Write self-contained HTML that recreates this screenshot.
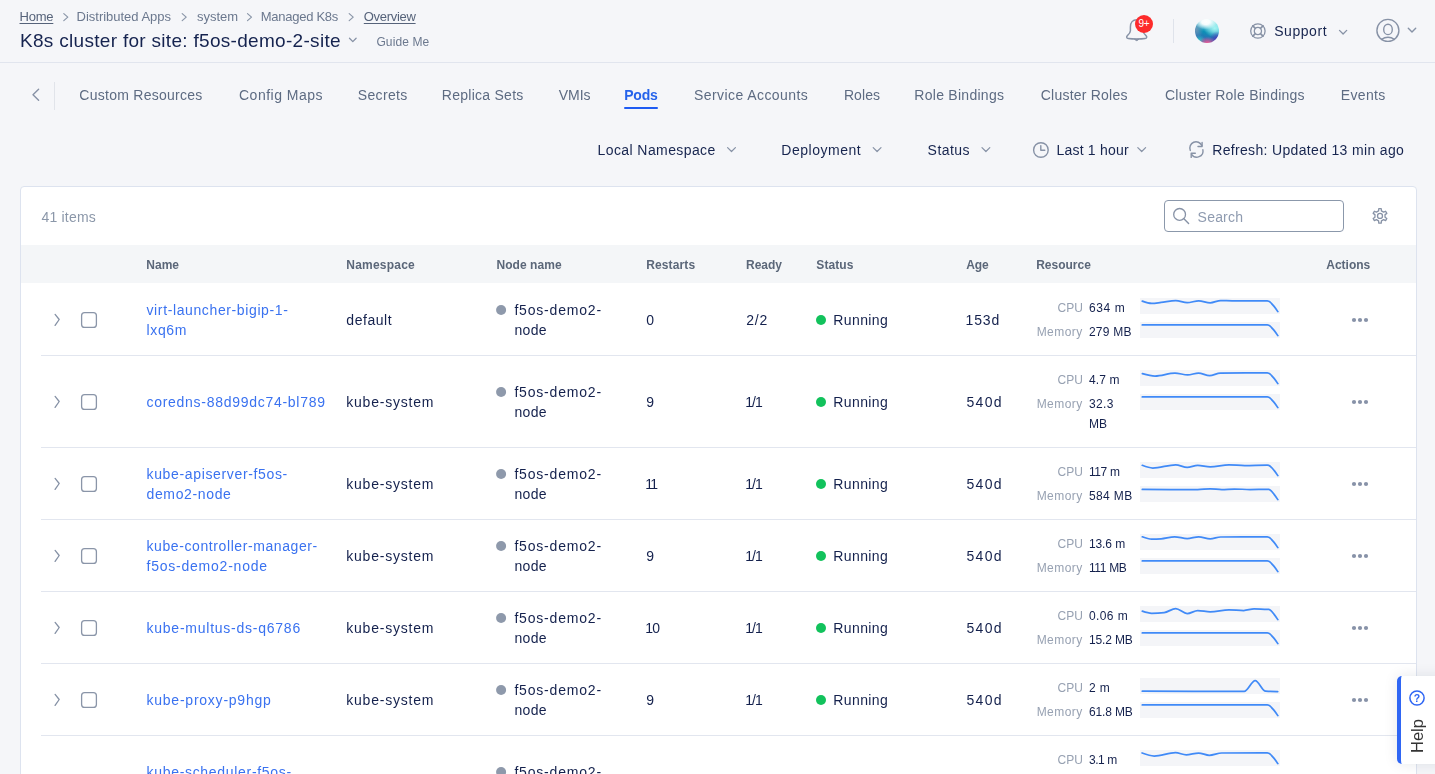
<!DOCTYPE html>
<html><head><meta charset="utf-8"><style>
html,body{margin:0;padding:0;}
body{width:1435px;height:774px;overflow:hidden;background:#f5f6f9;position:relative;font-family:"Liberation Sans", sans-serif;}
.t{position:absolute;white-space:pre;line-height:20px;}
svg.ov{position:absolute;left:0;top:0;width:1435px;height:774px;overflow:visible;}
</style></head><body>
<div style="position:absolute;left:0;top:62px;width:1435px;height:1px;background:#e1e5ee"></div>
<div style="position:absolute;left:1173px;top:19px;width:1px;height:24px;background:#dfe3eb"></div>
<div style="position:absolute;left:54px;top:82px;width:1px;height:28px;background:#e1e4ea"></div>
<div style="position:absolute;left:624px;top:107px;width:34px;height:2px;background:#1f5cf3;border-radius:1px"></div>
<div style="position:absolute;left:1195px;top:19px;width:24px;height:24px;border-radius:50%;background:
radial-gradient(ellipse 48% 32% at 45% 12%, #fff 0%, rgba(255,255,255,0.95) 35%, rgba(255,255,255,0) 100%),
radial-gradient(ellipse 38% 26% at 52% 100%, rgba(238,90,150,1) 0%, rgba(238,90,150,0) 100%),
radial-gradient(ellipse 32% 34% at 92% 85%, rgba(85,55,185,1) 0%, rgba(85,55,185,0) 100%),
radial-gradient(ellipse 26% 22% at 18% 88%, rgba(40,200,200,0.95) 0, rgba(40,200,200,0) 100%),
radial-gradient(ellipse 45% 38% at 82% 38%, rgba(165,245,242,1) 0%, rgba(165,245,242,0) 100%),
radial-gradient(ellipse 30% 35% at 5% 45%, rgba(130,150,185,0.8) 0%, rgba(130,150,185,0) 100%),
linear-gradient(195deg, #b5f3f3 5%, #5cc9dc 32%, #0b8fb6 55%, #2a72b4 75%, #6a4fa8 100%);"></div>
<div style="position:absolute;left:20px;top:186px;width:1395px;height:700px;background:#fff;border:1px solid #dde3ef;border-radius:4px"></div>
<div style="position:absolute;left:21px;top:245px;width:1395px;height:38px;background:#f4f6f8"></div>
<div style="position:absolute;left:1164px;top:200px;width:178px;height:30px;border:1px solid #8b98ab;border-radius:4px;background:#fff"></div>
<svg class="ov">
<polyline points="63.80,13.60 67.80,17.10 63.80,20.60" fill="none" stroke="#8a96a8" stroke-width="1.2" stroke-linecap="round" stroke-linejoin="round"/>
<polyline points="182.20,13.60 186.20,17.10 182.20,20.60" fill="none" stroke="#8a96a8" stroke-width="1.2" stroke-linecap="round" stroke-linejoin="round"/>
<polyline points="247.50,13.60 251.50,17.10 247.50,20.60" fill="none" stroke="#8a96a8" stroke-width="1.2" stroke-linecap="round" stroke-linejoin="round"/>
<polyline points="349.20,13.60 353.20,17.10 349.20,20.60" fill="none" stroke="#8a96a8" stroke-width="1.2" stroke-linecap="round" stroke-linejoin="round"/>
<polyline points="349.50,38.30 352.80,41.60 356.10,38.30" fill="none" stroke="#8792a6" stroke-width="1.3" stroke-linecap="round" stroke-linejoin="round"/>
<polyline points="1339.50,30.40 1343.10,34.00 1346.70,30.40" fill="none" stroke="#8792a6" stroke-width="1.3" stroke-linecap="round" stroke-linejoin="round"/>
<polyline points="1408.30,28.30 1412.00,32.00 1415.70,28.30" fill="none" stroke="#8792a6" stroke-width="1.4" stroke-linecap="round" stroke-linejoin="round"/>
<polyline points="38.60,89.30 33.00,94.80 38.60,100.30" fill="none" stroke="#8792a6" stroke-width="1.4" stroke-linecap="round" stroke-linejoin="round"/>
<polyline points="727.60,147.60 731.50,151.50 735.40,147.60" fill="none" stroke="#8792a6" stroke-width="1.2" stroke-linecap="round" stroke-linejoin="round"/>
<polyline points="873.20,147.60 877.10,151.50 881.00,147.60" fill="none" stroke="#8792a6" stroke-width="1.2" stroke-linecap="round" stroke-linejoin="round"/>
<polyline points="982.00,147.60 985.90,151.50 989.80,147.60" fill="none" stroke="#8792a6" stroke-width="1.2" stroke-linecap="round" stroke-linejoin="round"/>
<polyline points="1137.80,147.60 1141.70,151.50 1145.60,147.60" fill="none" stroke="#8792a6" stroke-width="1.2" stroke-linecap="round" stroke-linejoin="round"/>
<circle cx="1040.9" cy="150" r="7.3" fill="none" stroke="#8792a6" stroke-width="1.4"/>
<polyline points="1040.80,145.60 1040.80,150.20 1044.80,150.20" fill="none" stroke="#8792a6" stroke-width="1.4" stroke-linecap="round" stroke-linejoin="round"/>
<path d="M1190.3,150.4 A6.2,6.2 0 0 1 1201.8,145.6" fill="none" stroke="#8792a6" stroke-width="1.4" stroke-linecap="round"/>
<polyline points="1202.10,142.40 1202.10,146.50 1198.00,146.50" fill="none" stroke="#8792a6" stroke-width="1.4" stroke-linecap="round" stroke-linejoin="round"/>
<path d="M1202.9,149.8 A6.2,6.2 0 0 1 1191.6,154.3" fill="none" stroke="#8792a6" stroke-width="1.4" stroke-linecap="round"/>
<polyline points="1191.20,157.40 1191.20,153.30 1195.30,153.30" fill="none" stroke="#8792a6" stroke-width="1.4" stroke-linecap="round" stroke-linejoin="round"/>
<circle cx="1179.6" cy="214.4" r="5.9" fill="none" stroke="#8792a6" stroke-width="1.3"/>
<polyline points="1183.90,218.80 1188.60,223.50" fill="none" stroke="#8792a6" stroke-width="1.4" stroke-linecap="round" stroke-linejoin="round"/>
<path d="M1378.58,210.90 L1378.77,208.70 L1381.23,208.70 L1381.42,210.90 L1383.62,212.17 L1385.62,211.24 L1386.85,213.37 L1385.04,214.63 L1385.04,217.17 L1386.85,218.43 L1385.62,220.56 L1383.62,219.63 L1381.42,220.90 L1381.23,223.10 L1378.77,223.10 L1378.58,220.90 L1376.38,219.63 L1374.38,220.56 L1373.15,218.43 L1374.96,217.17 L1374.96,214.63 L1373.15,213.37 L1374.38,211.24 L1376.38,212.17Z" fill="none" stroke="#8792a6" stroke-width="1.3" stroke-linejoin="round"/>
<circle cx="1380" cy="215.9" r="2.5" fill="none" stroke="#8792a6" stroke-width="1.3"/>
<circle cx="1257.9" cy="31" r="7.2" fill="none" stroke="#8792a6" stroke-width="1.3"/>
<circle cx="1257.9" cy="31" r="3.6" fill="none" stroke="#8792a6" stroke-width="1.3"/>
<polyline points="1260.45,33.55 1262.99,36.09" fill="none" stroke="#8792a6" stroke-width="1.7" stroke-linecap="round" stroke-linejoin="round"/>
<polyline points="1255.35,33.55 1252.81,36.09" fill="none" stroke="#8792a6" stroke-width="1.7" stroke-linecap="round" stroke-linejoin="round"/>
<polyline points="1255.35,28.45 1252.81,25.91" fill="none" stroke="#8792a6" stroke-width="1.7" stroke-linecap="round" stroke-linejoin="round"/>
<polyline points="1260.45,28.45 1262.99,25.91" fill="none" stroke="#8792a6" stroke-width="1.7" stroke-linecap="round" stroke-linejoin="round"/>
<circle cx="1387.9" cy="30.4" r="11.0" fill="none" stroke="#8792a6" stroke-width="1.4"/>
<ellipse cx="1388" cy="29.4" rx="4.3" ry="5.2" fill="none" stroke="#8792a6" stroke-width="1.4"/>
<path d="M1381.3,39.6 Q1388,35.0 1394.7,39.6" fill="none" stroke="#8792a6" stroke-width="1.4"/>
<path d="M1136.7,19.8 C1132.8,19.8 1130.4,22.9 1130.4,26.9 L1130.4,30.8 C1130.4,33.0 1129.0,34.3 1127.4,35.6 C1126.2,36.6 1126.5,38.4 1128.3,38.6 C1131.0,39.0 1133.8,39.1 1136.7,39.1 C1139.6,39.1 1142.4,39.0 1145.1,38.6 C1146.9,38.4 1147.2,36.6 1146.0,35.6 C1144.4,34.3 1143.0,33.0 1143.0,30.8 L1143.0,26.9 C1143.0,22.9 1140.6,19.8 1136.7,19.8 Z" fill="none" stroke="#8792a6" stroke-width="1.5"/>
<path d="M1134.5,39.3 Q1136.7,42.0 1138.9,39.3 Z" fill="#8792a6" stroke="#8792a6" stroke-width="1"/>
<polyline points="55.10,314.40 59.20,319.50 55.10,325.40" fill="none" stroke="#8591a5" stroke-width="1.3" stroke-linecap="round" stroke-linejoin="round"/>
<rect x="81.6" y="312.6" width="14.8" height="14.8" rx="3" fill="#fff" stroke="#8a95a8" stroke-width="1.3"/>
<circle cx="501.1" cy="310.0" r="5" fill="#8e99ab"/>
<circle cx="821" cy="320.0" r="5" fill="#12c25c"/>
<rect x="1140" y="298" width="140" height="16" fill="#f4f5f8"/>
<path d="M1142.30,301.10 C1145.43,302.25 1148.57,303.40 1151.70,303.40 C1154.83,303.40 1157.97,302.76 1161.10,302.40 C1166.00,301.84 1170.90,300.50 1175.80,300.50 C1179.60,300.50 1183.40,302.70 1187.20,302.70 C1191.03,302.70 1194.87,300.80 1198.70,300.80 C1202.53,300.80 1206.37,302.90 1210.20,302.90 C1213.70,302.90 1217.20,300.50 1220.70,300.50 C1224.53,300.50 1228.37,300.80 1232.20,300.80 C1243.90,300.80 1255.60,300.80 1267.30,300.80 C1267.80,300.80 1268.30,301.07 1268.80,301.30 C1270.63,302.16 1272.47,304.31 1274.30,306.60 C1275.47,308.06 1276.63,309.83 1277.80,311.60" fill="none" stroke="#408af7" stroke-width="1.75" stroke-linecap="round" stroke-linejoin="round"/>
<rect x="1140" y="322" width="140" height="16" fill="#f4f5f8"/>
<path d="M1142.30,324.90 C1161.53,324.90 1180.77,324.90 1200.00,324.90 C1222.43,324.90 1244.87,324.90 1267.30,324.90 C1267.80,324.90 1268.30,325.09 1268.80,325.30 C1270.63,326.06 1272.47,328.31 1274.30,330.60 C1275.47,332.06 1276.63,333.83 1277.80,335.60" fill="none" stroke="#408af7" stroke-width="1.75" stroke-linecap="round" stroke-linejoin="round"/>
<circle cx="1354" cy="320" r="2.1" fill="#8792a8"/>
<circle cx="1360" cy="320" r="2.1" fill="#8792a8"/>
<circle cx="1366" cy="320" r="2.1" fill="#8792a8"/>
<polyline points="55.10,396.40 59.20,401.50 55.10,407.40" fill="none" stroke="#8591a5" stroke-width="1.3" stroke-linecap="round" stroke-linejoin="round"/>
<rect x="81.6" y="394.6" width="14.8" height="14.8" rx="3" fill="#fff" stroke="#8a95a8" stroke-width="1.3"/>
<circle cx="501.1" cy="392.0" r="5" fill="#8e99ab"/>
<circle cx="821" cy="402.0" r="5" fill="#12c25c"/>
<rect x="1140" y="370" width="140" height="16" fill="#f4f5f8"/>
<path d="M1142.40,373.60 C1146.60,374.80 1150.80,376.00 1155.00,376.00 C1161.67,376.00 1168.33,373.10 1175.00,373.10 C1179.23,373.10 1183.47,374.90 1187.70,374.90 C1191.30,374.90 1194.90,373.10 1198.50,373.10 C1202.20,373.10 1205.90,375.60 1209.60,375.60 C1213.17,375.60 1216.73,373.15 1220.30,373.10 C1235.97,372.90 1251.63,372.80 1267.30,372.80 C1267.80,372.80 1268.30,373.07 1268.80,373.30 C1270.63,374.16 1272.47,376.31 1274.30,378.60 C1275.47,380.06 1276.63,381.83 1277.80,383.60" fill="none" stroke="#408af7" stroke-width="1.75" stroke-linecap="round" stroke-linejoin="round"/>
<rect x="1140" y="394" width="140" height="16" fill="#f4f5f8"/>
<path d="M1142.30,396.90 C1161.53,396.90 1180.77,396.90 1200.00,396.90 C1222.43,396.90 1244.87,396.90 1267.30,396.90 C1267.80,396.90 1268.30,397.09 1268.80,397.30 C1270.63,398.06 1272.47,400.31 1274.30,402.60 C1275.47,404.06 1276.63,405.83 1277.80,407.60" fill="none" stroke="#408af7" stroke-width="1.75" stroke-linecap="round" stroke-linejoin="round"/>
<circle cx="1354" cy="402" r="2.1" fill="#8792a8"/>
<circle cx="1360" cy="402" r="2.1" fill="#8792a8"/>
<circle cx="1366" cy="402" r="2.1" fill="#8792a8"/>
<polyline points="55.10,478.40 59.20,483.50 55.10,489.40" fill="none" stroke="#8591a5" stroke-width="1.3" stroke-linecap="round" stroke-linejoin="round"/>
<rect x="81.6" y="476.6" width="14.8" height="14.8" rx="3" fill="#fff" stroke="#8a95a8" stroke-width="1.3"/>
<circle cx="501.1" cy="474.0" r="5" fill="#8e99ab"/>
<circle cx="821" cy="484.0" r="5" fill="#12c25c"/>
<rect x="1140" y="462" width="140" height="16" fill="#f4f5f8"/>
<path d="M1142.30,465.30 C1145.80,466.65 1149.30,468.00 1152.80,468.00 C1160.43,468.00 1168.07,464.80 1175.70,464.80 C1179.53,464.80 1183.37,467.40 1187.20,467.40 C1190.70,467.40 1194.20,465.30 1197.70,465.30 C1201.87,465.30 1206.03,466.90 1210.20,466.90 C1216.47,466.90 1222.73,464.80 1229.00,464.80 C1234.23,464.80 1239.47,465.50 1244.70,465.50 C1252.23,465.50 1259.77,465.10 1267.30,465.10 C1267.80,465.10 1268.30,465.17 1268.80,465.30 C1270.63,465.79 1272.47,468.31 1274.30,470.60 C1275.47,472.06 1276.63,473.83 1277.80,475.60" fill="none" stroke="#408af7" stroke-width="1.75" stroke-linecap="round" stroke-linejoin="round"/>
<rect x="1140" y="486" width="140" height="16" fill="#f4f5f8"/>
<path d="M1142.30,489.40 C1160.77,489.50 1179.23,489.60 1197.70,489.60 C1201.87,489.60 1206.03,488.80 1210.20,488.80 C1214.07,488.80 1217.93,489.60 1221.80,489.60 C1225.97,489.60 1230.13,489.00 1234.30,489.00 C1239.53,489.00 1244.77,489.50 1250.00,489.50 C1255.77,489.50 1261.53,489.30 1267.30,489.30 C1267.80,489.30 1268.30,489.30 1268.80,489.30 C1270.63,489.30 1272.47,492.31 1274.30,494.60 C1275.47,496.06 1276.63,497.83 1277.80,499.60" fill="none" stroke="#408af7" stroke-width="1.75" stroke-linecap="round" stroke-linejoin="round"/>
<circle cx="1354" cy="484" r="2.1" fill="#8792a8"/>
<circle cx="1360" cy="484" r="2.1" fill="#8792a8"/>
<circle cx="1366" cy="484" r="2.1" fill="#8792a8"/>
<polyline points="55.10,550.40 59.20,555.50 55.10,561.40" fill="none" stroke="#8591a5" stroke-width="1.3" stroke-linecap="round" stroke-linejoin="round"/>
<rect x="81.6" y="548.6" width="14.8" height="14.8" rx="3" fill="#fff" stroke="#8a95a8" stroke-width="1.3"/>
<circle cx="501.1" cy="546.0" r="5" fill="#8e99ab"/>
<circle cx="821" cy="556.0" r="5" fill="#12c25c"/>
<rect x="1140" y="534" width="140" height="16" fill="#f4f5f8"/>
<path d="M1142.30,536.80 C1145.43,538.00 1148.57,539.20 1151.70,539.20 C1154.83,539.20 1157.97,539.07 1161.10,538.80 C1165.63,538.41 1170.17,536.80 1174.70,536.80 C1178.87,536.80 1183.03,538.60 1187.20,538.60 C1191.03,538.60 1194.87,536.80 1198.70,536.80 C1202.53,536.80 1206.37,538.90 1210.20,538.90 C1213.70,538.90 1217.20,537.03 1220.70,537.00 C1236.23,536.87 1251.77,536.80 1267.30,536.80 C1267.80,536.80 1268.30,537.07 1268.80,537.30 C1270.63,538.16 1272.47,540.31 1274.30,542.60 C1275.47,544.06 1276.63,545.83 1277.80,547.60" fill="none" stroke="#408af7" stroke-width="1.75" stroke-linecap="round" stroke-linejoin="round"/>
<rect x="1140" y="558" width="140" height="16" fill="#f4f5f8"/>
<path d="M1142.30,560.90 C1161.53,560.90 1180.77,560.90 1200.00,560.90 C1222.43,560.90 1244.87,560.90 1267.30,560.90 C1267.80,560.90 1268.30,561.09 1268.80,561.30 C1270.63,562.06 1272.47,564.31 1274.30,566.60 C1275.47,568.06 1276.63,569.83 1277.80,571.60" fill="none" stroke="#408af7" stroke-width="1.75" stroke-linecap="round" stroke-linejoin="round"/>
<circle cx="1354" cy="556" r="2.1" fill="#8792a8"/>
<circle cx="1360" cy="556" r="2.1" fill="#8792a8"/>
<circle cx="1366" cy="556" r="2.1" fill="#8792a8"/>
<polyline points="55.10,622.40 59.20,627.50 55.10,633.40" fill="none" stroke="#8591a5" stroke-width="1.3" stroke-linecap="round" stroke-linejoin="round"/>
<rect x="81.6" y="620.6" width="14.8" height="14.8" rx="3" fill="#fff" stroke="#8a95a8" stroke-width="1.3"/>
<circle cx="501.1" cy="618.0" r="5" fill="#8e99ab"/>
<circle cx="821" cy="628.0" r="5" fill="#12c25c"/>
<rect x="1140" y="606" width="140" height="16" fill="#f4f5f8"/>
<path d="M1142.30,611.20 C1145.43,612.25 1148.57,613.30 1151.70,613.30 C1155.87,613.30 1160.03,613.07 1164.20,612.60 C1168.03,612.17 1171.87,608.60 1175.70,608.60 C1179.53,608.60 1183.37,613.60 1187.20,613.60 C1190.70,613.60 1194.20,610.60 1197.70,610.60 C1201.87,610.60 1206.03,611.80 1210.20,611.80 C1216.47,611.80 1222.73,609.90 1229.00,609.90 C1233.90,609.90 1238.80,610.50 1243.70,610.50 C1247.17,610.50 1250.63,608.90 1254.10,608.90 C1258.50,608.90 1262.90,609.40 1267.30,609.40 C1267.80,609.40 1268.30,609.30 1268.80,609.30 C1270.63,609.30 1272.47,612.31 1274.30,614.60 C1275.47,616.06 1276.63,617.83 1277.80,619.60" fill="none" stroke="#408af7" stroke-width="1.75" stroke-linecap="round" stroke-linejoin="round"/>
<rect x="1140" y="630" width="140" height="16" fill="#f4f5f8"/>
<path d="M1142.30,632.90 C1161.53,632.90 1180.77,632.90 1200.00,632.90 C1222.43,632.90 1244.87,632.90 1267.30,632.90 C1267.80,632.90 1268.30,633.09 1268.80,633.30 C1270.63,634.06 1272.47,636.31 1274.30,638.60 C1275.47,640.06 1276.63,641.83 1277.80,643.60" fill="none" stroke="#408af7" stroke-width="1.75" stroke-linecap="round" stroke-linejoin="round"/>
<circle cx="1354" cy="628" r="2.1" fill="#8792a8"/>
<circle cx="1360" cy="628" r="2.1" fill="#8792a8"/>
<circle cx="1366" cy="628" r="2.1" fill="#8792a8"/>
<polyline points="55.10,694.40 59.20,699.50 55.10,705.40" fill="none" stroke="#8591a5" stroke-width="1.3" stroke-linecap="round" stroke-linejoin="round"/>
<rect x="81.6" y="692.6" width="14.8" height="14.8" rx="3" fill="#fff" stroke="#8a95a8" stroke-width="1.3"/>
<circle cx="501.1" cy="690.0" r="5" fill="#8e99ab"/>
<circle cx="821" cy="700.0" r="5" fill="#12c25c"/>
<rect x="1140" y="678" width="140" height="16" fill="#f4f5f8"/>
<path d="M1142.30,691.20 C1176.27,691.30 1210.23,691.40 1244.20,691.40 C1247.87,691.40 1251.53,680.60 1255.20,680.60 C1258.67,680.60 1262.13,690.97 1265.60,691.20 C1269.63,691.47 1273.67,691.53 1277.70,691.60" fill="none" stroke="#408af7" stroke-width="1.75" stroke-linecap="round" stroke-linejoin="round"/>
<rect x="1140" y="702" width="140" height="16" fill="#f4f5f8"/>
<path d="M1142.30,704.90 C1161.53,704.90 1180.77,704.90 1200.00,704.90 C1222.43,704.90 1244.87,704.90 1267.30,704.90 C1267.80,704.90 1268.30,705.09 1268.80,705.30 C1270.63,706.06 1272.47,708.31 1274.30,710.60 C1275.47,712.06 1276.63,713.83 1277.80,715.60" fill="none" stroke="#408af7" stroke-width="1.75" stroke-linecap="round" stroke-linejoin="round"/>
<circle cx="1354" cy="700" r="2.1" fill="#8792a8"/>
<circle cx="1360" cy="700" r="2.1" fill="#8792a8"/>
<circle cx="1366" cy="700" r="2.1" fill="#8792a8"/>
<polyline points="55.10,776.40 59.20,781.50 55.10,787.40" fill="none" stroke="#8591a5" stroke-width="1.3" stroke-linecap="round" stroke-linejoin="round"/>
<rect x="81.6" y="774.6" width="14.8" height="14.8" rx="3" fill="#fff" stroke="#8a95a8" stroke-width="1.3"/>
<circle cx="501.1" cy="772.0" r="5" fill="#8e99ab"/>
<circle cx="821" cy="782.0" r="5" fill="#12c25c"/>
<rect x="1140" y="750" width="140" height="16" fill="#f4f5f8"/>
<path d="M1142.10,753.00 C1146.13,754.50 1150.17,756.00 1154.20,756.00 C1161.30,756.00 1168.40,752.70 1175.50,752.70 C1179.07,752.70 1182.63,754.80 1186.20,754.80 C1190.33,754.80 1194.47,753.00 1198.60,753.00 C1202.17,753.00 1205.73,755.30 1209.30,755.30 C1213.43,755.30 1217.57,753.04 1221.70,753.00 C1236.90,752.87 1252.10,752.80 1267.30,752.80 C1267.80,752.80 1268.30,753.07 1268.80,753.30 C1270.63,754.16 1272.47,756.31 1274.30,758.60 C1275.47,760.06 1276.63,761.83 1277.80,763.60" fill="none" stroke="#408af7" stroke-width="1.75" stroke-linecap="round" stroke-linejoin="round"/>
<rect x="1140" y="774" width="140" height="16" fill="#f4f5f8"/>
<path d="M1142.30,776.90 C1161.53,776.90 1180.77,776.90 1200.00,776.90 C1222.43,776.90 1244.87,776.90 1267.30,776.90 C1267.80,776.90 1268.30,777.09 1268.80,777.30 C1270.63,778.06 1272.47,780.31 1274.30,782.60 C1275.47,784.06 1276.63,785.83 1277.80,787.60" fill="none" stroke="#408af7" stroke-width="1.75" stroke-linecap="round" stroke-linejoin="round"/>
<circle cx="1354" cy="782" r="2.1" fill="#8792a8"/>
<circle cx="1360" cy="782" r="2.1" fill="#8792a8"/>
<circle cx="1366" cy="782" r="2.1" fill="#8792a8"/>
<rect x="41" y="355" width="1375" height="1" fill="#e2e6ef"/>
<rect x="41" y="447" width="1375" height="1" fill="#e2e6ef"/>
<rect x="41" y="519" width="1375" height="1" fill="#e2e6ef"/>
<rect x="41" y="591" width="1375" height="1" fill="#e2e6ef"/>
<rect x="41" y="663" width="1375" height="1" fill="#e2e6ef"/>
<rect x="41" y="735" width="1375" height="1" fill="#e2e6ef"/>
</svg>
<div style="position:absolute;left:1135px;top:15px;width:18px;height:18px;border-radius:50%;background:#fd2b2b;color:#fff;font-size:10px;line-height:18px;text-align:center;letter-spacing:-0.2px">9+</div>
<div style="position:absolute;left:0;top:0;width:1435px;height:774px;will-change:transform">
<div class="t" style="left:19.5px;top:7.0px;font-size:13px;color:#56637a;letter-spacing:-0.216px;text-decoration:underline;text-underline-offset:2px;">Home</div>
<div class="t" style="left:76.6px;top:7.0px;font-size:13px;color:#6b788e;letter-spacing:-0.019px;">Distributed Apps</div>
<div class="t" style="left:196.9px;top:7.0px;font-size:13px;color:#6b788e;">system</div>
<div class="t" style="left:260.8px;top:7.0px;font-size:13px;color:#6b788e;letter-spacing:-0.272px;">Managed K8s</div>
<div class="t" style="left:363.8px;top:7.0px;font-size:13px;color:#56637a;letter-spacing:-0.298px;text-decoration:underline;text-underline-offset:2px;">Overview</div>
<div class="t" style="left:20.0px;top:31.0px;font-size:19px;color:#15234f;letter-spacing:0.302px;">K8s cluster for site: f5os-demo-2-site</div>
<div class="t" style="left:376.4px;top:32.0px;font-size:12px;color:#6b788e;letter-spacing:0.121px;">Guide Me</div>
<div class="t" style="left:1274.2px;top:21.0px;font-size:14px;color:#17254f;letter-spacing:0.559px;">Support</div>
<div class="t" style="left:79.3px;top:85.0px;font-size:14px;color:#5d6b82;letter-spacing:0.264px;">Custom Resources</div>
<div class="t" style="left:239.0px;top:85.0px;font-size:14px;color:#5d6b82;letter-spacing:0.491px;">Config Maps</div>
<div class="t" style="left:357.7px;top:85.0px;font-size:14px;color:#5d6b82;letter-spacing:0.356px;">Secrets</div>
<div class="t" style="left:441.8px;top:85.0px;font-size:14px;color:#5d6b82;letter-spacing:0.264px;">Replica Sets</div>
<div class="t" style="left:558.7px;top:85.0px;font-size:14px;color:#5d6b82;letter-spacing:-0.030px;">VMIs</div>
<div class="t" style="left:624.2px;top:85.0px;font-size:14px;color:#2563eb;font-weight:700;letter-spacing:-0.214px;">Pods</div>
<div class="t" style="left:694.0px;top:85.0px;font-size:14px;color:#5d6b82;letter-spacing:0.429px;">Service Accounts</div>
<div class="t" style="left:843.9px;top:85.0px;font-size:14px;color:#5d6b82;letter-spacing:0.077px;">Roles</div>
<div class="t" style="left:914.3px;top:85.0px;font-size:14px;color:#5d6b82;letter-spacing:0.276px;">Role Bindings</div>
<div class="t" style="left:1040.8px;top:85.0px;font-size:14px;color:#5d6b82;letter-spacing:0.214px;">Cluster Roles</div>
<div class="t" style="left:1165.0px;top:85.0px;font-size:14px;color:#5d6b82;letter-spacing:0.249px;">Cluster Role Bindings</div>
<div class="t" style="left:1340.7px;top:85.0px;font-size:14px;color:#5d6b82;letter-spacing:0.360px;">Events</div>
<div class="t" style="left:597.6px;top:139.6px;font-size:14px;color:#17254f;letter-spacing:0.402px;">Local Namespace</div>
<div class="t" style="left:781.3px;top:139.6px;font-size:14px;color:#17254f;letter-spacing:0.521px;">Deployment</div>
<div class="t" style="left:927.6px;top:139.6px;font-size:14px;color:#17254f;letter-spacing:0.462px;">Status</div>
<div class="t" style="left:1056.4px;top:139.6px;font-size:14px;color:#17254f;letter-spacing:0.221px;">Last 1 hour</div>
<div class="t" style="left:1212.2px;top:139.6px;font-size:14px;color:#17254f;letter-spacing:0.335px;">Refresh: Updated 13 min ago</div>
<div class="t" style="left:41.5px;top:207.0px;font-size:14px;color:#8b97a9;letter-spacing:0.199px;">41 items</div>
<div class="t" style="left:1197.6px;top:207.0px;font-size:14px;color:#8f9bb0;letter-spacing:0.206px;">Search</div>
<div class="t" style="left:146.3px;top:255.3px;font-size:12px;color:#5b6779;font-weight:700;">Name</div>
<div class="t" style="left:346.3px;top:255.3px;font-size:12px;color:#5b6779;font-weight:700;letter-spacing:0.221px;">Namespace</div>
<div class="t" style="left:496.4px;top:255.3px;font-size:12px;color:#5b6779;font-weight:700;letter-spacing:0.074px;">Node name</div>
<div class="t" style="left:646.2px;top:255.3px;font-size:12px;color:#5b6779;font-weight:700;letter-spacing:0.121px;">Restarts</div>
<div class="t" style="left:746.1px;top:255.3px;font-size:12px;color:#5b6779;font-weight:700;letter-spacing:-0.036px;">Ready</div>
<div class="t" style="left:816.3px;top:255.3px;font-size:12px;color:#5b6779;font-weight:700;letter-spacing:0.100px;">Status</div>
<div class="t" style="left:966.3px;top:255.3px;font-size:12px;color:#5b6779;font-weight:700;letter-spacing:-0.098px;">Age</div>
<div class="t" style="left:1036.2px;top:255.3px;font-size:12px;color:#5b6779;font-weight:700;">Resource</div>
<div class="t" style="left:1326.3px;top:255.3px;font-size:12px;color:#5b6779;font-weight:700;letter-spacing:-0.022px;">Actions</div>
<div class="t" style="left:146.5px;top:300.0px;font-size:14px;color:#3a72f0;letter-spacing:0.618px;">virt-launcher-bigip-1-</div>
<div class="t" style="left:146.5px;top:320.0px;font-size:14px;color:#3a72f0;letter-spacing:0.654px;">lxq6m</div>
<div class="t" style="left:346.3px;top:309.6px;font-size:14px;color:#14214d;letter-spacing:0.543px;">default</div>
<div class="t" style="left:514.4px;top:300.2px;font-size:14px;color:#14214d;letter-spacing:0.807px;">f5os-demo2-</div>
<div class="t" style="left:514.4px;top:319.7px;font-size:14px;color:#14214d;letter-spacing:0.347px;">node</div>
<div class="t" style="left:646.2px;top:309.6px;font-size:14px;color:#14214d;">0</div>
<div class="t" style="left:746.2px;top:309.6px;font-size:14px;color:#14214d;letter-spacing:0.762px;">2/2</div>
<div class="t" style="left:833.3px;top:309.6px;font-size:14px;color:#14214d;letter-spacing:0.389px;">Running</div>
<div class="t" style="left:965.5px;top:309.6px;font-size:14px;color:#14214d;letter-spacing:0.881px;">153d</div>
<div class="t" style="left:1057.5px;top:298.0px;font-size:12px;color:#97a1b2;letter-spacing:0.015px;">CPU</div>
<div class="t" style="left:1036.7px;top:322.0px;font-size:12px;color:#97a1b2;letter-spacing:0.433px;">Memory</div>
<div class="t" style="left:1088.9px;top:298.0px;font-size:12px;color:#14214d;letter-spacing:0.636px;">634 m</div>
<div class="t" style="left:1088.9px;top:322.0px;font-size:12px;color:#14214d;letter-spacing:0.250px;">279 MB</div>
<div class="t" style="left:146.5px;top:391.6px;font-size:14px;color:#3a72f0;letter-spacing:0.719px;">coredns-88d99dc74-bl789</div>
<div class="t" style="left:346.3px;top:391.6px;font-size:14px;color:#14214d;letter-spacing:0.770px;">kube-system</div>
<div class="t" style="left:514.4px;top:382.2px;font-size:14px;color:#14214d;letter-spacing:0.807px;">f5os-demo2-</div>
<div class="t" style="left:514.4px;top:401.7px;font-size:14px;color:#14214d;letter-spacing:0.347px;">node</div>
<div class="t" style="left:646.2px;top:391.6px;font-size:14px;color:#14214d;">9</div>
<div class="t" style="left:745.2px;top:391.6px;font-size:14px;color:#14214d;letter-spacing:-0.988px;">1/1</div>
<div class="t" style="left:833.3px;top:391.6px;font-size:14px;color:#14214d;letter-spacing:0.389px;">Running</div>
<div class="t" style="left:966.5px;top:391.6px;font-size:14px;color:#14214d;letter-spacing:1.281px;">540d</div>
<div class="t" style="left:1057.5px;top:369.6px;font-size:12px;color:#97a1b2;letter-spacing:0.015px;">CPU</div>
<div class="t" style="left:1036.7px;top:394.0px;font-size:12px;color:#97a1b2;letter-spacing:0.433px;">Memory</div>
<div class="t" style="left:1088.9px;top:369.6px;font-size:12px;color:#14214d;letter-spacing:0.171px;">4.7 m</div>
<div class="t" style="left:1088.9px;top:394.0px;font-size:12px;color:#14214d;letter-spacing:0.406px;">32.3</div>
<div class="t" style="left:1088.9px;top:413.6px;font-size:12px;color:#14214d;">MB</div>
<div class="t" style="left:146.5px;top:464.0px;font-size:14px;color:#3a72f0;letter-spacing:0.651px;">kube-apiserver-f5os-</div>
<div class="t" style="left:146.5px;top:484.0px;font-size:14px;color:#3a72f0;letter-spacing:0.641px;">demo2-node</div>
<div class="t" style="left:346.3px;top:473.6px;font-size:14px;color:#14214d;letter-spacing:0.770px;">kube-system</div>
<div class="t" style="left:514.4px;top:464.2px;font-size:14px;color:#14214d;letter-spacing:0.807px;">f5os-demo2-</div>
<div class="t" style="left:514.4px;top:483.7px;font-size:14px;color:#14214d;letter-spacing:0.347px;">node</div>
<div class="t" style="left:645.2px;top:473.6px;font-size:14px;color:#14214d;letter-spacing:-1.747px;">11</div>
<div class="t" style="left:745.2px;top:473.6px;font-size:14px;color:#14214d;letter-spacing:-0.988px;">1/1</div>
<div class="t" style="left:833.3px;top:473.6px;font-size:14px;color:#14214d;letter-spacing:0.389px;">Running</div>
<div class="t" style="left:966.5px;top:473.6px;font-size:14px;color:#14214d;letter-spacing:1.281px;">540d</div>
<div class="t" style="left:1057.5px;top:462.0px;font-size:12px;color:#97a1b2;letter-spacing:0.015px;">CPU</div>
<div class="t" style="left:1036.7px;top:486.0px;font-size:12px;color:#97a1b2;letter-spacing:0.433px;">Memory</div>
<div class="t" style="left:1088.9px;top:462.0px;font-size:12px;color:#14214d;letter-spacing:-0.366px;">117 m</div>
<div class="t" style="left:1088.9px;top:486.0px;font-size:12px;color:#14214d;letter-spacing:0.390px;">584 MB</div>
<div class="t" style="left:146.5px;top:536.0px;font-size:14px;color:#3a72f0;letter-spacing:0.591px;">kube-controller-manager-</div>
<div class="t" style="left:146.5px;top:556.0px;font-size:14px;color:#3a72f0;letter-spacing:0.775px;">f5os-demo2-node</div>
<div class="t" style="left:346.3px;top:545.6px;font-size:14px;color:#14214d;letter-spacing:0.770px;">kube-system</div>
<div class="t" style="left:514.4px;top:536.2px;font-size:14px;color:#14214d;letter-spacing:0.807px;">f5os-demo2-</div>
<div class="t" style="left:514.4px;top:555.7px;font-size:14px;color:#14214d;letter-spacing:0.347px;">node</div>
<div class="t" style="left:646.2px;top:545.6px;font-size:14px;color:#14214d;">9</div>
<div class="t" style="left:745.2px;top:545.6px;font-size:14px;color:#14214d;letter-spacing:-0.988px;">1/1</div>
<div class="t" style="left:833.3px;top:545.6px;font-size:14px;color:#14214d;letter-spacing:0.389px;">Running</div>
<div class="t" style="left:966.5px;top:545.6px;font-size:14px;color:#14214d;letter-spacing:1.281px;">540d</div>
<div class="t" style="left:1057.5px;top:534.0px;font-size:12px;color:#97a1b2;letter-spacing:0.015px;">CPU</div>
<div class="t" style="left:1036.7px;top:558.0px;font-size:12px;color:#97a1b2;letter-spacing:0.433px;">Memory</div>
<div class="t" style="left:1088.9px;top:534.0px;font-size:12px;color:#14214d;letter-spacing:-0.078px;">13.6 m</div>
<div class="t" style="left:1088.9px;top:558.0px;font-size:12px;color:#14214d;letter-spacing:-0.334px;">111 MB</div>
<div class="t" style="left:146.5px;top:617.6px;font-size:14px;color:#3a72f0;letter-spacing:0.757px;">kube-multus-ds-q6786</div>
<div class="t" style="left:346.3px;top:617.6px;font-size:14px;color:#14214d;letter-spacing:0.770px;">kube-system</div>
<div class="t" style="left:514.4px;top:608.2px;font-size:14px;color:#14214d;letter-spacing:0.807px;">f5os-demo2-</div>
<div class="t" style="left:514.4px;top:627.7px;font-size:14px;color:#14214d;letter-spacing:0.347px;">node</div>
<div class="t" style="left:645.2px;top:617.6px;font-size:14px;color:#14214d;letter-spacing:-0.786px;">10</div>
<div class="t" style="left:745.2px;top:617.6px;font-size:14px;color:#14214d;letter-spacing:-0.988px;">1/1</div>
<div class="t" style="left:833.3px;top:617.6px;font-size:14px;color:#14214d;letter-spacing:0.389px;">Running</div>
<div class="t" style="left:966.5px;top:617.6px;font-size:14px;color:#14214d;letter-spacing:1.281px;">540d</div>
<div class="t" style="left:1057.5px;top:606.0px;font-size:12px;color:#97a1b2;letter-spacing:0.015px;">CPU</div>
<div class="t" style="left:1036.7px;top:630.0px;font-size:12px;color:#97a1b2;letter-spacing:0.433px;">Memory</div>
<div class="t" style="left:1088.9px;top:606.0px;font-size:12px;color:#14214d;letter-spacing:0.422px;">0.06 m</div>
<div class="t" style="left:1088.9px;top:630.0px;font-size:12px;color:#14214d;letter-spacing:-0.131px;">15.2 MB</div>
<div class="t" style="left:146.5px;top:689.6px;font-size:14px;color:#3a72f0;letter-spacing:0.763px;">kube-proxy-p9hgp</div>
<div class="t" style="left:346.3px;top:689.6px;font-size:14px;color:#14214d;letter-spacing:0.770px;">kube-system</div>
<div class="t" style="left:514.4px;top:680.2px;font-size:14px;color:#14214d;letter-spacing:0.807px;">f5os-demo2-</div>
<div class="t" style="left:514.4px;top:699.7px;font-size:14px;color:#14214d;letter-spacing:0.347px;">node</div>
<div class="t" style="left:646.2px;top:689.6px;font-size:14px;color:#14214d;">9</div>
<div class="t" style="left:745.2px;top:689.6px;font-size:14px;color:#14214d;letter-spacing:-0.988px;">1/1</div>
<div class="t" style="left:833.3px;top:689.6px;font-size:14px;color:#14214d;letter-spacing:0.389px;">Running</div>
<div class="t" style="left:966.5px;top:689.6px;font-size:14px;color:#14214d;letter-spacing:1.281px;">540d</div>
<div class="t" style="left:1057.5px;top:678.0px;font-size:12px;color:#97a1b2;letter-spacing:0.015px;">CPU</div>
<div class="t" style="left:1036.7px;top:702.0px;font-size:12px;color:#97a1b2;letter-spacing:0.433px;">Memory</div>
<div class="t" style="left:1088.9px;top:678.0px;font-size:12px;color:#14214d;letter-spacing:0.396px;">2 m</div>
<div class="t" style="left:1088.9px;top:702.0px;font-size:12px;color:#14214d;letter-spacing:-0.131px;">61.8 MB</div>
<div class="t" style="left:146.5px;top:762.0px;font-size:14px;color:#3a72f0;letter-spacing:0.692px;">kube-scheduler-f5os-</div>
<div class="t" style="left:146.5px;top:782.0px;font-size:14px;color:#3a72f0;letter-spacing:0.641px;">demo2-node</div>
<div class="t" style="left:346.3px;top:771.6px;font-size:14px;color:#14214d;letter-spacing:0.770px;">kube-system</div>
<div class="t" style="left:514.4px;top:762.2px;font-size:14px;color:#14214d;letter-spacing:0.807px;">f5os-demo2-</div>
<div class="t" style="left:514.4px;top:781.7px;font-size:14px;color:#14214d;letter-spacing:0.347px;">node</div>
<div class="t" style="left:646.2px;top:771.6px;font-size:14px;color:#14214d;">9</div>
<div class="t" style="left:745.2px;top:771.6px;font-size:14px;color:#14214d;letter-spacing:-0.988px;">1/1</div>
<div class="t" style="left:833.3px;top:771.6px;font-size:14px;color:#14214d;letter-spacing:0.389px;">Running</div>
<div class="t" style="left:966.5px;top:771.6px;font-size:14px;color:#14214d;letter-spacing:1.281px;">540d</div>
<div class="t" style="left:1057.5px;top:749.6px;font-size:12px;color:#97a1b2;letter-spacing:0.015px;">CPU</div>
<div class="t" style="left:1036.7px;top:774.0px;font-size:12px;color:#97a1b2;letter-spacing:0.433px;">Memory</div>
<div class="t" style="left:1088.9px;top:749.6px;font-size:12px;color:#14214d;letter-spacing:-0.429px;">3.1 m</div>
<div class="t" style="left:1088.9px;top:774.0px;font-size:12px;color:#14214d;letter-spacing:0.406px;">21.3</div>
<div class="t" style="left:1088.9px;top:793.6px;font-size:12px;color:#14214d;">MB</div>
</div>
<div style="position:absolute;left:1397px;top:676px;width:60px;height:88px;background:#fff;border-left:4px solid #2f66f4;border-radius:5px 0 0 5px;box-shadow:0 0 14px rgba(20,30,60,0.10);box-sizing:border-box"></div>
<svg class="ov">
<circle cx="1417" cy="698" r="7.1" fill="none" stroke="#2f66f4" stroke-width="1.5"/>
</svg>
<div style="position:absolute;left:1412px;top:691px;width:10px;text-align:center;font-size:10.5px;font-weight:700;line-height:14px;color:#2f66f4">?</div>
<div style="position:absolute;left:1398px;top:725.5px;width:38px;height:20px;line-height:20px;text-align:center;font-size:16.5px;color:#343434;transform:rotate(-90deg);">Help</div>
</body></html>
